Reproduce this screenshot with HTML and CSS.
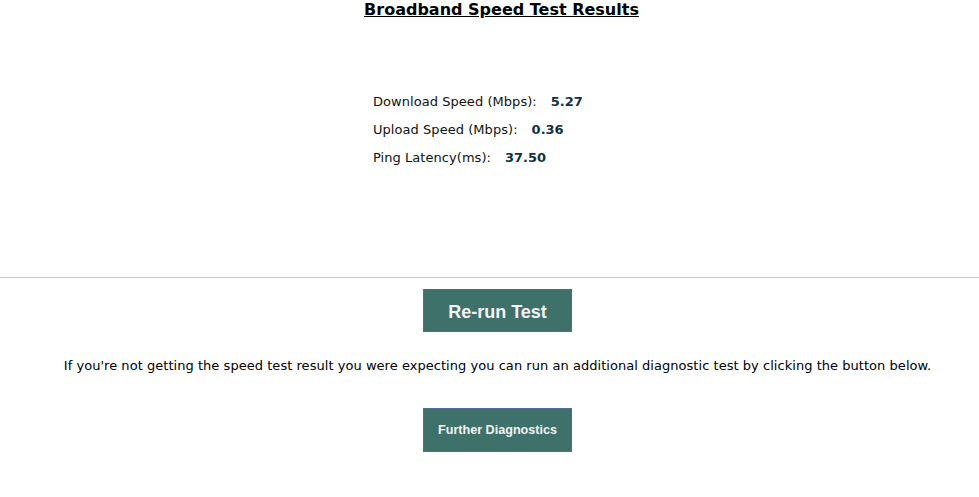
FILE: index.html
```html
<!DOCTYPE html>
<html>
<head>
<meta charset="utf-8">
<link rel="stylesheet" href="styles.css">
</head>
<body>
<div class="page">
  <h1 class="title">Broadband Speed Test Results</h1>
  <div class="results">
    <div class="row"><span class="label">Download Speed (Mbps):</span><span class="value">5.27</span></div>
    <div class="row"><span class="label">Upload Speed (Mbps):</span><span class="value">0.36</span></div>
    <div class="row"><span class="label">Ping Latency(ms):</span><span class="value">37.50</span></div>
  </div>
</div>
<hr class="divider">
<div class="actions">
  <button class="btn btn-large">Re-run Test</button>
  <p class="note">If you're not getting the speed test result you were expecting you can run an additional diagnostic test by clicking the button below.</p>
  <button class="btn btn-small">Further Diagnostics</button>
</div>
</body>
</html>
```
FILE: styles.css
```css
html, body {
  margin: 0;
  padding: 0;
  background: #fff;
}
body {
  font-family: "DejaVu Sans", Verdana, sans-serif;
  color: #000;
}
.page {
  padding-left: 24px;
  height: 277px;
  box-sizing: border-box;
}
.title {
  margin: 0;
  padding-top: 1px;
  font-size: 16px;
  line-height: 18px;
  font-weight: bold;
  text-decoration: underline;
  text-align: center;
  color: #000;
}
.results {
  margin: 74px 0 0 349px;
  font-size: 13px;
}
.row {
  display: flex;
  align-items: baseline;
  height: 28px;
  line-height: 18px;
}
.label {
  color: #111;
  letter-spacing: 0.05px;
}
.value {
  margin-left: 14px;
  font-weight: bold;
  color: #12323f;
}
.divider {
  margin: 0;
  border: 0;
  border-top: 1px solid #c8c8c8;
  height: 0;
}
.actions {
  display: flex;
  flex-direction: column;
  align-items: center;
  padding-left: 16px;
  padding-top: 11px;
}
.btn {
  font-family: "Liberation Sans", Arial, sans-serif;
  font-weight: bold;
  color: #f4f4f4;
  background: #3f716b;
  border: 1px solid #4d6f8c;
  border-radius: 0;
  width: 149px;
  cursor: pointer;
}
.btn-large {
  height: 43px;
  font-size: 18px;
  padding-top: 5px;
}
.btn-small {
  height: 44px;
  font-size: 12.6px;
}
.note {
  margin: 26px 0 34px 0;
  font-size: 13px;
  line-height: 16px;
  letter-spacing: 0.04px;
  color: #000;
}
```
